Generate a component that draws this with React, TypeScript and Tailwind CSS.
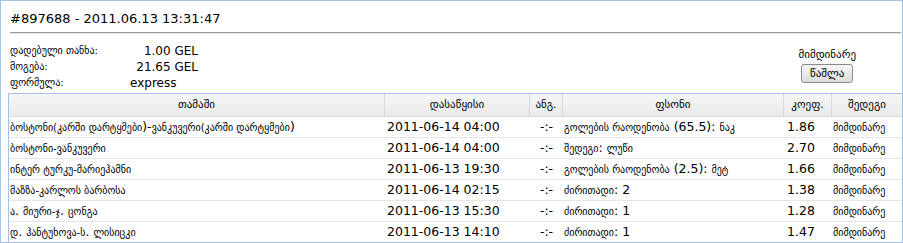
import type { ReactNode } from "react";

type Bet = {
  game: string;
  start: string;
  score: string;
  pick: string;
  odds: string;
  result: string;
};

const bets: Bet[] = [
  {
    game: "ბოსტონი(კარში დარტყმები)-ვანკუვერი(კარში დარტყმები)",
    start: "2011-06-14 04:00",
    score: "-:-",
    pick: "გოლების რაოდენობა (65.5): ნაკ",
    odds: "1.86",
    result: "მიმდინარე",
  },
  {
    game: "ბოსტონი-ვანკუვერი",
    start: "2011-06-14 04:00",
    score: "-:-",
    pick: "შედეგი: ლუწი",
    odds: "2.70",
    result: "მიმდინარე",
  },
  {
    game: "ინტერ ტურკუ-მარიეჰამნი",
    start: "2011-06-13 19:30",
    score: "-:-",
    pick: "გოლების რაოდენობა (2.5): მეტ",
    odds: "1.66",
    result: "მიმდინარე",
  },
  {
    game: "მაზზა-კარლოს ბარბოსა",
    start: "2011-06-14 02:15",
    score: "-:-",
    pick: "ძირითადი: 2",
    odds: "1.38",
    result: "მიმდინარე",
  },
  {
    game: "ა. მიური-ჯ. ცონგა",
    start: "2011-06-13 15:30",
    score: "-:-",
    pick: "ძირითადი: 1",
    odds: "1.28",
    result: "მიმდინარე",
  },
  {
    game: "დ. ჰანტუხოვა-ს. ლისიცკი",
    start: "2011-06-13 14:10",
    score: "-:-",
    pick: "ძირითადი: 1",
    odds: "1.47",
    result: "მიმდინარე",
  },
];

// georgian runs are set smaller than the latin digits, like the old sylfaen fallback
function Ka({ text }: { text: string }) {
  const parts = text.split(/([\u10A0-\u10FF]+(?:[ ()\-.][\u10A0-\u10FF]+)*)/);
  return (
    <>
      {parts.map((p, i) =>
        /[\u10A0-\u10FF]/.test(p) ? (
          <span key={i} className="text-[10px]">
            {p}
          </span>
        ) : (
          <span key={i}>{p}</span>
        ),
      )}
    </>
  );
}

function Th({ children }: { children: ReactNode }) {
  return (
    <div className="flex h-[22px] items-center justify-center border-r border-[#d8d8d8] text-[11px] last:border-r-0">
      {children}
    </div>
  );
}

export default function App() {
  return (
    <div
      className="h-[243px] w-[903px] overflow-hidden border border-[#a4c2e8] bg-white text-black"
      style={{ fontFamily: '"DejaVu Sans", Verdana, sans-serif' }}
    >
      <div className="pl-[9px] pr-[1px]">
        <div className="flex h-[31px] items-center pt-[4px] text-[13px]">
          #897688 - 2011.06.13 13:31:47
        </div>
        <div className="h-[2px] border-t border-[#9c9c9c] bg-[#e4e4e4]" />
      </div>

      <div className="flex h-[59px] justify-between pl-[9px] pr-[46px]">
        <div className="flex flex-col pt-[9px] text-[12px] leading-[16px]">
          <div className="flex">
            <span className="w-[120px] text-[10px]">დადებული თანხა:</span>
            <span className="w-[68px] text-right">1.00 GEL</span>
          </div>
          <div className="flex">
            <span className="w-[120px] text-[10px]">მოგება:</span>
            <span className="w-[68px] text-right">21.65 GEL</span>
          </div>
          <div className="flex">
            <span className="w-[120px] text-[10px]">ფორმულა:</span>
            <span>express</span>
          </div>
        </div>
        <div className="flex flex-col items-center pt-[13px]">
          <span className="text-[11px] leading-[16px]">მიმდინარე</span>
          <button
            type="button"
            className="mt-[1px] h-[19px] rounded-[3px] border border-[#8a8a8a] bg-[linear-gradient(#f6f6f6,#dcdcdc)] px-[8px] text-[11px] leading-[15px] text-black"
          >
            წაშლა
          </button>
        </div>
      </div>

      <div className="ml-[7px] border-t border-l border-[#a4c2e8]">
        <div className="grid grid-cols-[376px_145px_33px_221px_48px_1fr] border-b border-[#dcdcdc] bg-[linear-gradient(#f6f6f6,#ebebeb)]">
          <Th>თამაში</Th>
          <Th>დასაწყისი</Th>
          <Th>ანგ.</Th>
          <Th>ფსონი</Th>
          <Th>კოეფ.</Th>
          <Th>შედეგი</Th>
        </div>
        {bets.map((b, i) => (
          <div
            key={i}
            className="grid h-[21px] grid-cols-[376px_145px_33px_221px_48px_1fr] items-center border-b border-[#e6e6e6] text-[12.5px] last:h-[20px] last:border-b-0"
          >
            <div className="truncate pl-[1px]">
              <Ka text={b.game} />
            </div>
            <div className="pl-[2px]">{b.start}</div>
            <div className="text-center">{b.score}</div>
            <div className="truncate pl-[1px]">
              <Ka text={b.pick} />
            </div>
            <div className="pl-[3px]">{b.odds}</div>
            <div className="pl-[1px] text-[10px]">{b.result}</div>
          </div>
        ))}
      </div>
    </div>
  );
}
